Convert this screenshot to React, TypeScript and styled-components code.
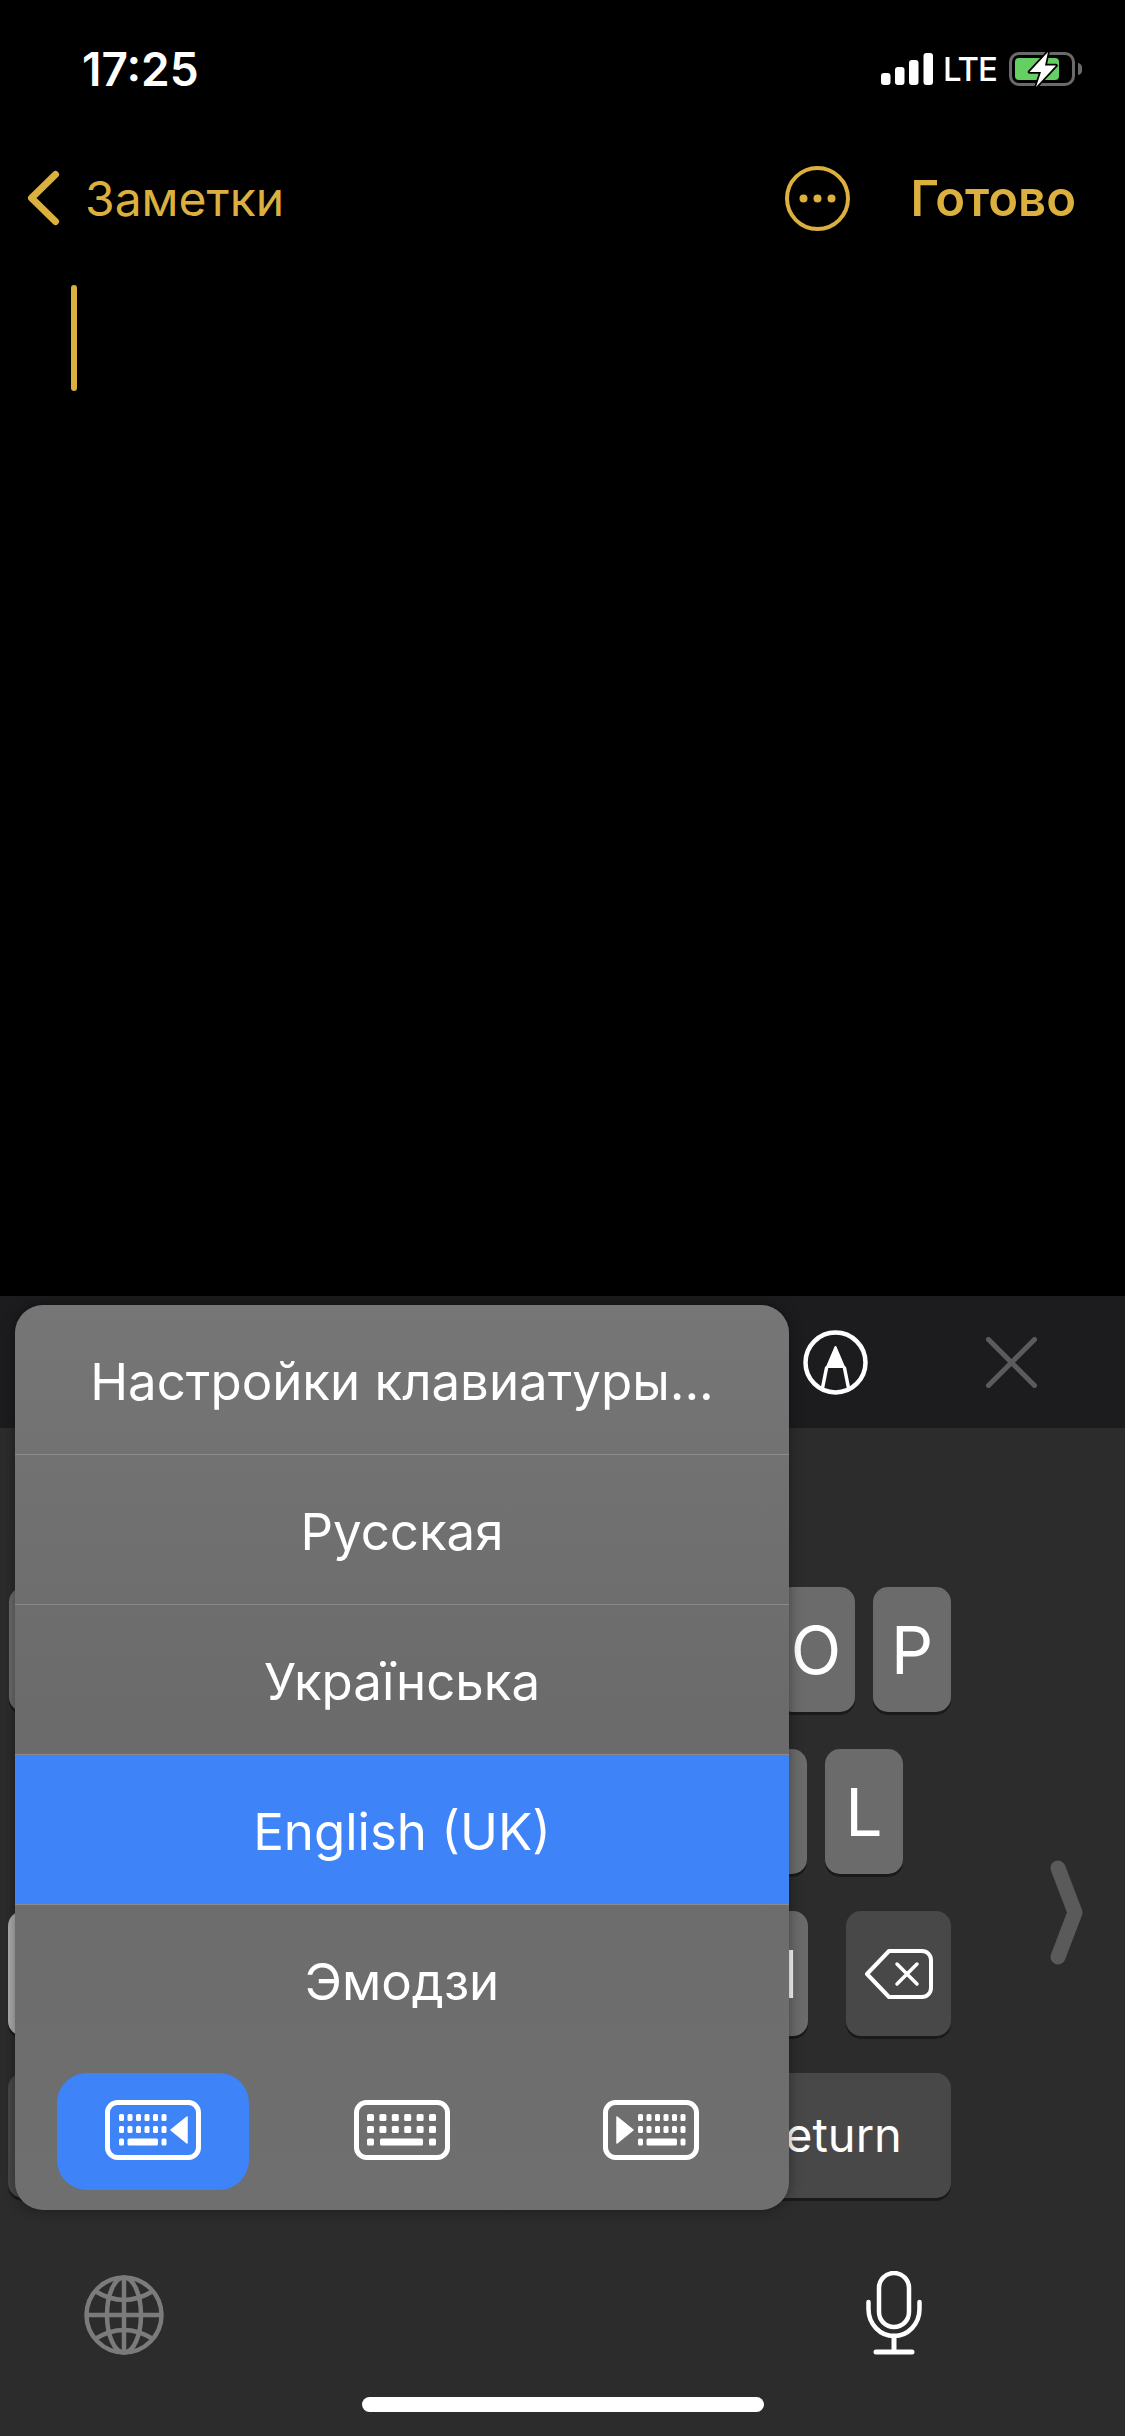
import React from "react";
import styled, { createGlobalStyle } from "styled-components";

const GlobalStyle = createGlobalStyle`
  html, body {
    margin: 0;
    padding: 0;
    background: #000;
  }
  * {
    box-sizing: border-box;
  }
`;

const accent = "#dbb03f";

const Screen = styled.div`
  width: 1125px;
  height: 2436px;
  overflow: hidden;
  display: flex;
  flex-direction: column;
  background: #000;
  font-family: Inter, "Liberation Sans", sans-serif;
  color: #fff;
`;

const StatusBar = styled.div`
  height: 138px;
  flex: none;
  display: flex;
  align-items: center;
  justify-content: space-between;
  padding: 0 43px 0 82px;
`;

const Time = styled.div`
  font-size: 46px;
  font-weight: 600;
  line-height: 1;
`;

const StatusIcons = styled.div`
  display: flex;
  align-items: center;
`;

const Lte = styled.span`
  font-size: 33px;
  font-weight: 500;
  line-height: 1;
  letter-spacing: -1px;
  margin: 0 12px 0 10px;
`;

const NavBar = styled.div`
  height: 120px;
  flex: none;
  display: flex;
  align-items: center;
  padding: 0 49px 0 27px;
  color: ${accent};
`;

const BackLabel = styled.span`
  font-size: 48px;
  margin-left: 25px;
  margin-right: auto;
`;

const DoneLabel = styled.span`
  font-size: 49px;
  font-weight: 600;
  margin-left: 61px;
`;

const Editor = styled.div`
  flex: 1;
  padding: 27px 0 0 71px;
`;

const Caret = styled.div`
  width: 6px;
  height: 106px;
  border-radius: 3px;
  background: ${accent};
`;

const Keyboard = styled.div`
  position: relative;
  height: 1140px;
  flex: none;
  background: #2c2c2c;
`;

const Toolbar = styled.div`
  height: 132px;
  display: flex;
  align-items: center;
  justify-content: flex-end;
  gap: 118px;
  padding: 0 88px 0 0;
  background: #1c1c1e;
`;

const KeyPanel = styled.div`
  display: flex;
  padding: 159px 0 0 8px;
`;

const KeyRows = styled.div`
  width: 943px;
  flex: none;
  display: flex;
  flex-direction: column;
  gap: 37px;
`;

const KeyRow = styled.div<{ $inset?: number; $spread?: boolean }>`
  display: flex;
  gap: 18px;
  padding-left: ${(p) => p.$inset ?? 0}px;
  justify-content: ${(p) => (p.$spread ? "space-between" : "flex-start")};
`;

const Key = styled.div<{ $width?: number; $tone?: "letter" | "dark" | "light"; $small?: boolean }>`
  width: ${(p) => p.$width ?? 78}px;
  height: 125px;
  flex: none;
  display: flex;
  align-items: center;
  justify-content: center;
  border-radius: 15px;
  padding-bottom: ${(p) => (p.$small ? 2 : 0)}px;
  font-size: ${(p) => (p.$small ? 47 : 66)}px;
  line-height: 1;
  background: ${(p) =>
    p.$tone === "dark" ? "#484848" : p.$tone === "light" ? "#aeaeae" : "#6b6b6b"};
  box-shadow: 0 3px 0 #1a1a1a;
`;

const LetterGroup = styled.div`
  display: flex;
  gap: 18px;
`;

const NextArrow = styled.svg`
  flex: none;
  margin: 273px 0 0 99px;
`;

const BottomBar = styled.div`
  display: flex;
  align-items: center;
  justify-content: space-between;
  padding: 73px 203px 0 84px;
`;

const GlobeWrap = styled.div`
  display: flex;
  padding-top: 3px;
`;

const HomeIndicator = styled.div`
  width: 402px;
  height: 15px;
  margin: 42px auto 0;
  border-radius: 8px;
  background: #fff;
`;

const PopupShadow = styled.div`
  position: absolute;
  top: 9px;
  left: 15px;
  width: 774px;
  height: 905px;
  border-radius: 28px;
  box-shadow: 0 0 14px rgba(0, 0, 0, 0.4);
`;

const Popup = styled.div`
  position: absolute;
  top: 9px;
  left: 15px;
  width: 774px;
  height: 905px;
  border-radius: 28px;
  overflow: hidden;
  background: linear-gradient(180deg, #767676 0%, #6b6b6b 45%, #6f6f6f 100%);
`;

const MenuRow = styled.div<{ $active?: boolean; $divider?: boolean }>`
  height: 150px;
  display: flex;
  align-items: center;
  justify-content: center;
  padding-top: 4px;
  font-size: 51px;
  background: ${(p) => (p.$active ? "#3e83f7" : "transparent")};
  border-bottom: 1px solid ${(p) => (p.$divider ? "#8a8a8a" : "transparent")};
`;

const ModeRow = styled.div`
  display: flex;
  gap: 57px;
  padding: 18px 42px 0;
`;

const ModeButton = styled.div<{ $active?: boolean }>`
  width: 192px;
  height: 117px;
  display: flex;
  align-items: center;
  justify-content: center;
  padding-bottom: 3px;
  border-radius: 30px;
  background: ${(p) => (p.$active ? "#3e83f7" : "transparent")};
`;

function Chevron() {
  return (
    <svg width="33" height="56" viewBox="0 0 33 56" fill="none" stroke={accent} strokeWidth="7" strokeLinecap="round" strokeLinejoin="round">
      <path d="M28.5 4.5 L4.5 28 L28.5 51.5" />
    </svg>
  );
}

function SignalIcon() {
  return (
    <svg width="52" height="32" viewBox="0 0 52 32" fill="#fff">
      <rect x="0" y="20" width="9.5" height="12" rx="3" />
      <rect x="14" y="14" width="9.5" height="18" rx="3" />
      <rect x="28" y="7" width="9.5" height="25" rx="3" />
      <rect x="42.5" y="0" width="9.5" height="32" rx="3" />
    </svg>
  );
}

function BatteryIcon() {
  const bolt = "39,0 20.5,20 32,20 27,35 47,13.5 36,13.5";
  return (
    <svg width="73" height="35" viewBox="0 0 73 35" fill="none">
      <rect x="1.5" y="1.5" width="63" height="31" rx="8.5" stroke="#6a6a6a" strokeWidth="3" />
      <path d="M69 11 a4 5.5 0 0 1 0 12 Z" fill="#6a6a6a" />
      <rect x="6" y="6" width="44" height="22" rx="4" fill="#65cf63" />
      <polygon points={bolt} fill="#fff" stroke="#000" strokeWidth="3.5" strokeLinejoin="round" paintOrder="stroke" />
    </svg>
  );
}

function MoreIcon() {
  return (
    <svg width="65" height="65" viewBox="0 0 65 65" fill={accent}>
      <circle cx="32.5" cy="32.5" r="30.5" fill="none" stroke={accent} strokeWidth="4" />
      <circle cx="18.5" cy="32.5" r="4" />
      <circle cx="32.5" cy="32.5" r="4" />
      <circle cx="46.5" cy="32.5" r="4" />
    </svg>
  );
}

function MarkupIcon() {
  return (
    <svg width="65" height="65" viewBox="0 0 65 65" fill="none" stroke="#fff" strokeWidth="4.5" strokeLinecap="round">
      <circle cx="32.5" cy="32.5" r="30" />
      <path d="M32.5 17 L41 37 H24 Z" fill="#fff" strokeWidth="2" strokeLinejoin="round" />
      <path d="M23.5 38 L19.5 58 M41.5 38 L45.5 58" strokeWidth="3.5" />
    </svg>
  );
}

function CloseIcon() {
  return (
    <svg width="51" height="51" viewBox="0 0 51 51" fill="none" stroke="#5b5b5d" strokeWidth="5" strokeLinecap="round">
      <path d="M2.5 2.5 L48.5 48.5 M48.5 2.5 L2.5 48.5" />
    </svg>
  );
}

function BackspaceIcon() {
  return (
    <svg width="68" height="50" viewBox="0 0 68 50" fill="none" stroke="#fff" strokeWidth="4" strokeLinejoin="round" strokeLinecap="round">
      <path d="M24 2 H57 a9 9 0 0 1 9 9 V39 a9 9 0 0 1 -9 9 H24 L2 25 Z" />
      <path d="M32 15 L52 35 M52 15 L32 35" strokeWidth="3.5" />
    </svg>
  );
}

function GlobeIcon() {
  return (
    <svg width="80" height="80" viewBox="0 0 80 80" fill="none" stroke="#7b7b7b" strokeWidth="4.5">
      <circle cx="40" cy="40" r="37.5" />
      <ellipse cx="40" cy="40" rx="17" ry="37.5" />
      <path d="M40 2.5 V77.5 M2.5 40 H77.5" />
      <path d="M11 16 Q40 34 69 16 M11 64 Q40 46 69 64" />
    </svg>
  );
}

function MicIcon() {
  return (
    <svg width="56" height="84" viewBox="0 0 56 84" fill="none" stroke="#fff" strokeWidth="4.5" strokeLinecap="round">
      <rect x="13" y="2" width="30" height="54" rx="15" />
      <path d="M2.5 31 V38 A25.5 27 0 0 0 53.5 38 V31" />
      <path d="M28 65 V81 M10 81 H46" strokeWidth="5" />
    </svg>
  );
}

type Dock = "left" | "center" | "right";

// key layout of the three small keyboard glyphs, in a 96x60 box
function KeyboardIcon({ dock }: { dock: Dock }) {
  const compact = dock !== "center";
  const startX = dock === "left" ? 14 : dock === "right" ? 35 : 13;
  const step = compact ? 8.5 : 12.4;
  const w = compact ? 5 : 7;
  const cols = [0, 1, 2, 3, 4, 5];
  const lastX = startX + step * 5;
  const tops = [14, 26];
  return (
    <svg width="96" height="60" viewBox="0 0 96 60" fill="#fff">
      <rect x="2.5" y="2.5" width="91" height="55" rx="10" fill="none" stroke="#fff" strokeWidth="5" />
      {tops.map((y) =>
        cols.map((c) => <rect key={`${y}-${c}`} x={startX + step * c} y={y} width={w} height="7" rx="1.5" />)
      )}
      <rect x={startX} y="38.5" width={w} height="7" rx="1.5" />
      <rect x={startX + w + (compact ? 3.5 : 6)} y="38.5" width={lastX - startX - w - (compact ? 7 : 12)} height="7" rx="1.5" />
      <rect x={lastX} y="38.5" width={w} height="7" rx="1.5" />
      {dock === "left" && <polygon points="66,30 82,17 82,43" stroke="#fff" strokeWidth="1.5" strokeLinejoin="round" />}
      {dock === "right" && <polygon points="30,30 14,17 14,43" stroke="#fff" strokeWidth="1.5" strokeLinejoin="round" />}
    </svg>
  );
}

const languages = ["Настройки клавиатуры...", "Русская", "Українська", "English (UK)", "Эмодзи"];
const docks: Dock[] = ["left", "center", "right"];

// the menu covers every other key cap, so only these letters show
const shownLetters = "OPKLM";

function LetterKeys({ row }: { row: string }) {
  return (
    <>
      {row.split("").map((k) => (
        <Key key={k}>{shownLetters.includes(k) ? k : null}</Key>
      ))}
    </>
  );
}

export default function App() {
  return (
    <Screen>
      <GlobalStyle />
      <StatusBar>
        <Time>17:25</Time>
        <StatusIcons>
          <SignalIcon />
          <Lte>LTE</Lte>
          <BatteryIcon />
        </StatusIcons>
      </StatusBar>

      <NavBar>
        <Chevron />
        <BackLabel>Заметки</BackLabel>
        <MoreIcon />
        <DoneLabel>Готово</DoneLabel>
      </NavBar>

      <Editor>
        <Caret />
      </Editor>

      <Keyboard>
        <Toolbar>
          <MarkupIcon />
          <CloseIcon />
        </Toolbar>

        <KeyPanel>
          <KeyRows>
            <KeyRow $inset={1}>
              <LetterKeys row="QWERTYUIOP" />
            </KeyRow>
            <KeyRow $inset={49}>
              <LetterKeys row="ASDFGHJKL" />
            </KeyRow>
            <KeyRow $spread>
              <Key $width={108} $tone="light" />
              <LetterGroup>
                <LetterKeys row="ZXCVBNM" />
              </LetterGroup>
              <Key $width={105} $tone="dark">
                <BackspaceIcon />
              </Key>
            </KeyRow>
            <KeyRow $spread>
              <Key $width={118} $tone="dark" />
              <Key $width={557} />
              <Key $width={232} $tone="dark" $small>
                return
              </Key>
            </KeyRow>
          </KeyRows>
          <NextArrow width="33" height="105" viewBox="0 0 33 105" fill="none" stroke="#5a5a5a" strokeWidth="15" strokeLinecap="round" strokeLinejoin="round">
            <path d="M8 8 L25 52.5 L8 97" />
          </NextArrow>
        </KeyPanel>

        <BottomBar>
          <GlobeWrap>
            <GlobeIcon />
          </GlobeWrap>
          <MicIcon />
        </BottomBar>
        <HomeIndicator />

        <PopupShadow />
        <Popup>
          {languages.map((label, i) => (
            <MenuRow key={label} $active={i === 3} $divider={i < 4}>
              {label}
            </MenuRow>
          ))}
          <ModeRow>
            {docks.map((d) => (
              <ModeButton key={d} $active={d === "left"}>
                <KeyboardIcon dock={d} />
              </ModeButton>
            ))}
          </ModeRow>
        </Popup>
      </Keyboard>
    </Screen>
  );
}
